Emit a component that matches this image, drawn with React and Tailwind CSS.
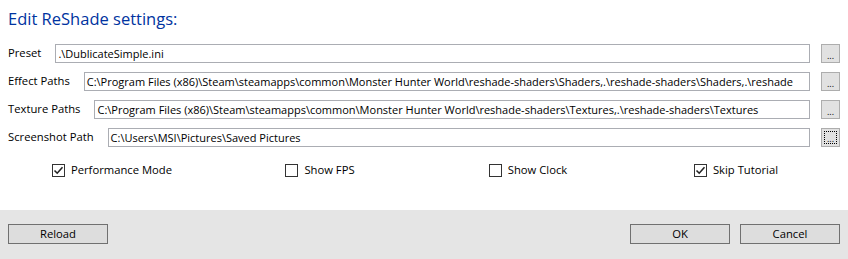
import { useState } from "react";

const font = { fontFamily: '"Open Sans", "Noto Sans", sans-serif' };

const paths = [
  { label: "Preset", value: ".\\DublicateSimple.ini" },
  {
    label: "Effect Paths",
    value:
      "C:\\Program Files (x86)\\Steam\\steamapps\\common\\Monster Hunter World\\reshade-shaders\\Shaders,.\\reshade-shaders\\Shaders,.\\reshade",
  },
  {
    label: "Texture Paths",
    value:
      "C:\\Program Files (x86)\\Steam\\steamapps\\common\\Monster Hunter World\\reshade-shaders\\Textures,.\\reshade-shaders\\Textures",
  },
  { label: "Screenshot Path", value: "C:\\Users\\MSI\\Pictures\\Saved Pictures", focused: true },
];

function Checkbox({ label, checked, onChange }) {
  return (
    <label className="flex items-center gap-[6px] cursor-pointer select-none">
      <span
        className="w-[13px] h-[13px] border border-[#333333] bg-white flex items-center justify-center"
        onClick={onChange}
      >
        {checked && (
          <svg width="11" height="11" viewBox="0 0 11 11">
            <path d="M1.5 5.5 L4.2 8.2 L9.5 2.2" fill="none" stroke="#222" strokeWidth="1.6" />
          </svg>
        )}
      </span>
      <span className="text-[11.25px] leading-[16px] text-black">{label}</span>
    </label>
  );
}

export default function App() {
  const [opts, setOpts] = useState({
    perf: true,
    fps: false,
    clock: false,
    tutorial: true,
  });

  const toggle = (key) => setOpts({ ...opts, [key]: !opts[key] });

  return (
    <div className="w-[848px] h-[259px] bg-white flex flex-col" style={font}>
      <div className="flex-1 px-[8px]">
        <div className="pt-[8px] text-[16.5px] leading-[22px] text-[#0033a0]">
          Edit ReShade settings:
        </div>

        <div className="mt-[14px] flex flex-col gap-[9px]">
          {paths.map((p) => (
            <div key={p.label} className="flex items-center h-[19px]">
              <span className="text-[11.25px] text-black whitespace-nowrap pr-[14px]">{p.label}</span>
              <div className="flex-1 min-w-0 h-[19px] border border-[#abadb3] bg-white overflow-hidden px-[2px] text-[11px] leading-[17px] text-black whitespace-nowrap">
                {p.value}
              </div>
              <button className="ml-[11px] w-[19px] h-[19px] border border-[#adadad] bg-[#e1e1e1] flex items-end justify-center p-[2px]">
                <span
                  className={
                    "w-full h-full flex items-end justify-center text-[9px] leading-[9px] text-black " +
                    (p.focused ? "border border-dotted border-black" : "")
                  }
                >
                  ...
                </span>
              </button>
            </div>
          ))}
        </div>

        <div className="mt-[15px] grid grid-cols-4">
          <div className="flex justify-center">
            <Checkbox label="Performance Mode" checked={opts.perf} onChange={() => toggle("perf")} />
          </div>
          <div className="flex justify-center">
            <Checkbox label="Show FPS" checked={opts.fps} onChange={() => toggle("fps")} />
          </div>
          <div className="flex justify-center">
            <Checkbox label="Show Clock" checked={opts.clock} onChange={() => toggle("clock")} />
          </div>
          <div className="flex justify-center">
            <Checkbox label="Skip Tutorial" checked={opts.tutorial} onChange={() => toggle("tutorial")} />
          </div>
        </div>
      </div>

      <div className="h-[49px] bg-[#e5e5e5] flex items-center justify-between px-[8px] pb-[1px]">
        <button className="w-[100px] h-[20px] border border-[#707070] bg-[#dddddd] text-[11.25px] leading-[16px] text-black">
          Reload
        </button>
        <div className="flex gap-[10px]">
          <button className="w-[100px] h-[20px] border border-[#707070] bg-[#dddddd] text-[11.25px] leading-[16px] text-black">
            OK
          </button>
          <button className="w-[100px] h-[20px] border border-[#707070] bg-[#dddddd] text-[11.25px] leading-[16px] text-black">
            Cancel
          </button>
        </div>
      </div>
    </div>
  );
}
